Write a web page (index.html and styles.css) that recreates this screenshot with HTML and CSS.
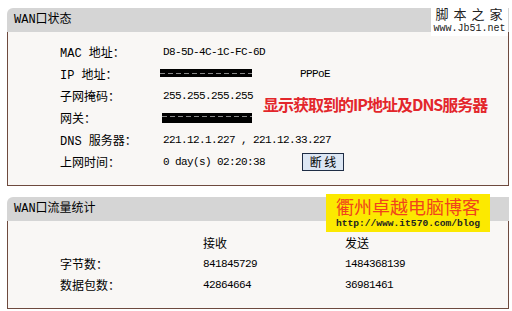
FILE: index.html
```html
<!DOCTYPE html>
<html lang="zh-CN">
<head>
    <meta charset="UTF-8">
    <title>WAN口状态</title>
    <link rel="stylesheet" href="styles.css">
</head>
<body>
<div class="page">

    <div class="panel status">
        <div class="panel-head">WAN口状态</div>
        <div class="panel-body">
            <div class="row"><span class="lbl">MAC 地址：</span><span class="val">D8-5D-4C-1C-FC-6D</span></div>
            <div class="row"><span class="lbl">IP 地址：</span><span class="val"><span class="cell"><i class="redact"></i></span>PPPoE</span></div>
            <div class="row"><span class="lbl">子网掩码：</span><span class="val">255.255.255.255</span></div>
            <div class="row"><span class="lbl">网关：</span><span class="val"><i class="redact gw"></i></span></div>
            <div class="row"><span class="lbl">DNS 服务器：</span><span class="val">221.12.1.227 , 221.12.33.227</span></div>
            <div class="row"><span class="lbl">上网时间：</span><span class="val"><span class="cell">0 day(s) 02:20:38</span><button class="btn">断 线</button></span></div>
        </div>
    </div>

    <div class="panel traffic">
        <div class="panel-head">WAN口流量统计</div>
        <div class="panel-body">
            <div class="row3"><span></span><span class="zh">接收</span><span class="zh">发送</span></div>
            <div class="row3"><span class="lbl">字节数：</span><span class="val">841845729</span><span class="val">1484368139</span></div>
            <div class="row3"><span class="lbl">数据包数：</span><span class="val">42864664</span><span class="val">36981461</span></div>
        </div>
    </div>

    <!-- overlays pasted on the screenshot -->
    <div class="note">显示获取到的IP地址及DNS服务器</div>

    <div class="mark-jb">
        <div class="jb-title">脚本之家</div>
        <div class="jb-url">www.Jb51.net</div>
    </div>

    <div class="mark-blog">
        <div class="blog-title">衢州卓越电脑博客</div>
        <div class="blog-url">http://www.it570.com/blog</div>
    </div>

</div>
</body>
</html>
```

FILE: styles.css
```css
html, body {
  margin: 0;
  background: #fff;
}

body {
  font-family: "Liberation Mono", "Noto Sans CJK SC", monospace;
  font-size: 12px;
  color: #000;
}

.page {
  position: relative;
  width: 512px;
  height: 311px;
  padding: 8px 0 0 7px;
  box-sizing: border-box;
  overflow: hidden;
}

.panel {width: 502px;}
.traffic {margin-top: 11px;}

.panel-head {
  height: 24px;
  line-height: 24px;
  padding-left: 7px;
  background: #d5d5d5;
  border-top-left-radius: 6px;
  font-size: 12px;
}

.panel-body {
  background: #f9f7f5;
  border: 1px solid #6e4a3e;
  border-top: none;
  padding-left: 52px;
}

.status .panel-body {padding-top: 9px; padding-bottom: 12px;}
.traffic .panel-body {padding-top: 11px; padding-bottom: 13px;}

.row {
  display: grid;
  grid-template-columns: 103px 1fr;
  align-items: center;
  height: 22px;
}

.row3 {
  display: grid;
  grid-template-columns: 143px 142px 1fr;
  align-items: center;
  height: 21px;
}

.lbl {font-size: 12px;}
.zh {font-size: 12px;}
.val {font-size: 11px; letter-spacing: -0.6px; display: flex; align-items: center;}

.cell {display: inline-block; width: 137px;}

.redact {
  display: inline-block;
  width: 92px;
  height: 8px;
  margin-left: -3px;
  background-color: #000;
  background-image: repeating-linear-gradient(90deg, #888 0 5px, transparent 5px 8px);
  background-size: 100% 1px;
  background-repeat: no-repeat;
  background-position: 0 4px;
}
.redact.gw {height: 10px; width: 90px; margin-left: -1px; background-position: 0 3px;}

.btn {
  width: 42px;
  height: 18px;
  padding: 0;
  margin-left: 2px;
  font-family: "Noto Sans CJK SC", sans-serif;
  font-size: 12px;
  line-height: 16px;
  letter-spacing: 0;
  background: #dde7f4;
  border: 1px solid #1f2d45;
  border-radius: 0;
  color: #000;
}

.note {
  position: absolute;
  left: 263px;
  top: 94px;
  font-family: "Noto Sans CJK SC", sans-serif;
  font-size: 16px;
  font-weight: bold;
  line-height: 20px;
  color: #e3262b;
  letter-spacing: -1px;
}

.mark-jb {
  position: absolute;
  left: 431px;
  top: 5px;
  width: 77px;
  height: 31px;
  background: #fff;
  text-align: center;
}
.jb-title {
  font-family: "Noto Sans CJK SC", sans-serif;
  font-size: 13px;
  line-height: 18px;
  letter-spacing: 5px;
  padding-left: 4px;
  color: #222;
}
.jb-url {
  font-family: "Liberation Mono", monospace;
  font-size: 10px;
  line-height: 12px;
  color: #222;
}

.mark-blog {
  position: absolute;
  left: 326px;
  top: 194px;
  width: 164px;
  height: 38px;
  background: #fce900;
  text-align: center;
}
.blog-title {
  font-family: "Noto Sans CJK SC", sans-serif;
  font-size: 18px;
  line-height: 24px;
  color: #f0431c;
}
.blog-url {
  font-family: "Liberation Mono", monospace;
  font-size: 9.6px;
  font-weight: bold;
  line-height: 11px;
  color: #222;
}
```
